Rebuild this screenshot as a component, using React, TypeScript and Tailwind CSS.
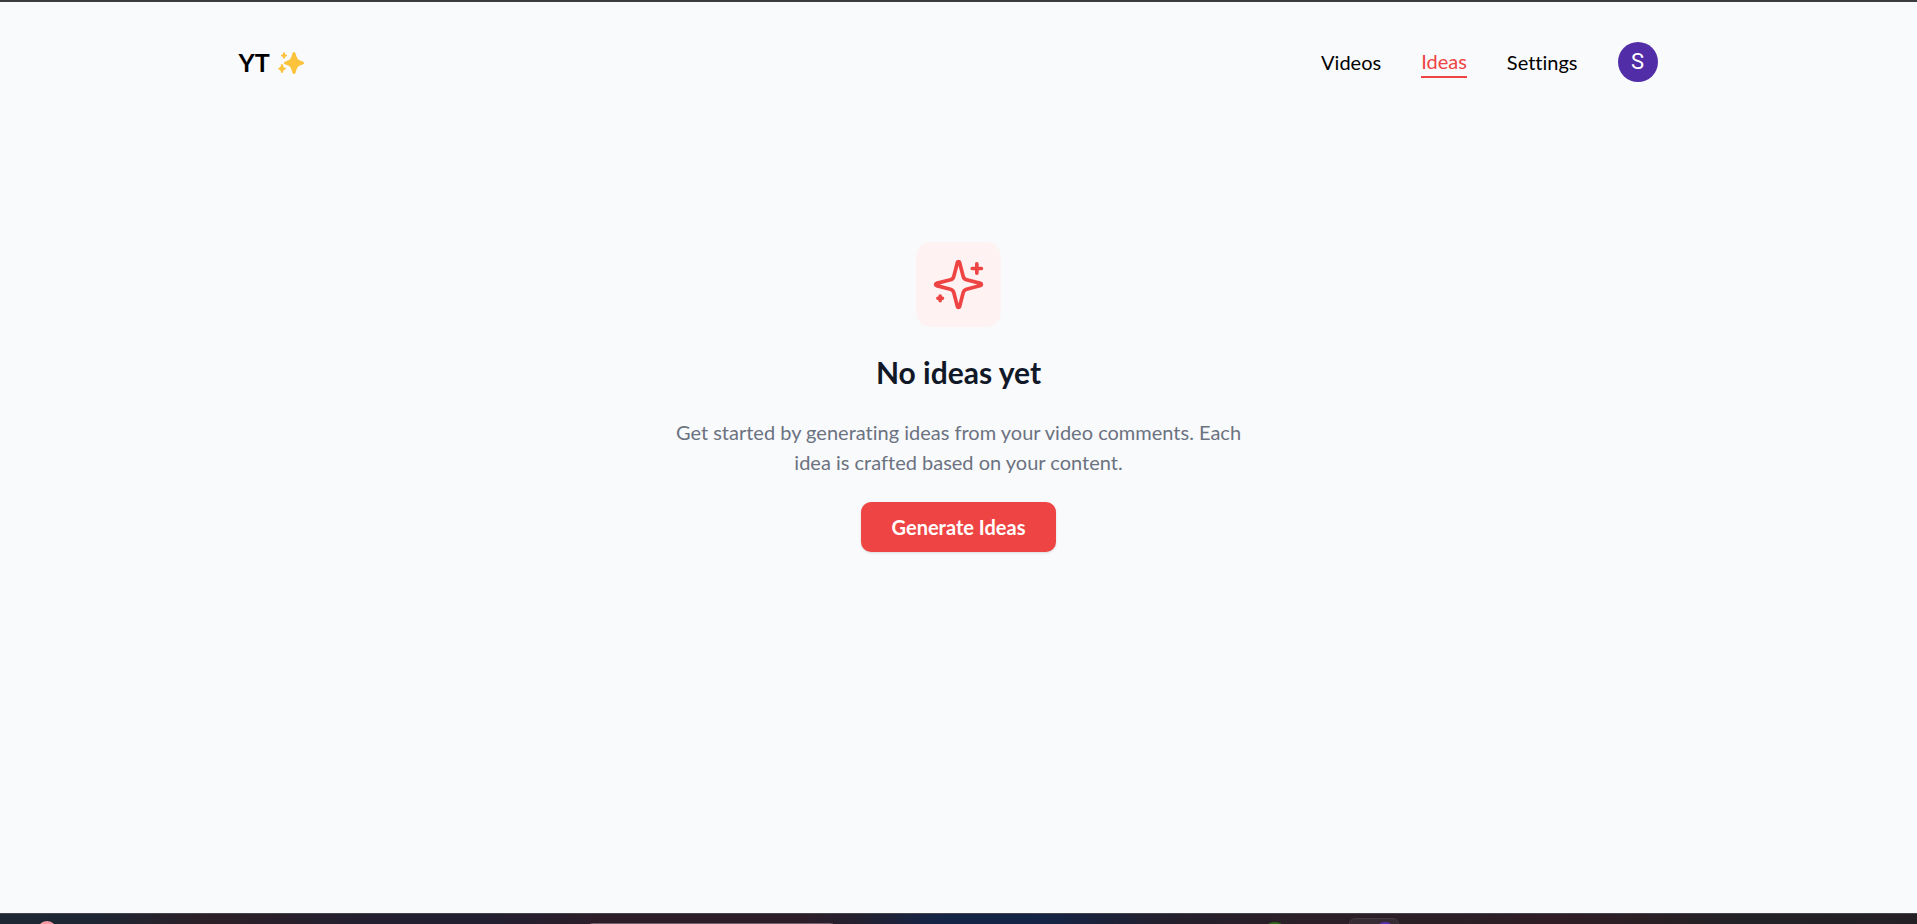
import React from "react";

function SparkleEmoji() {
  return (
    <svg viewBox="0 -2 26 26" className="size-[26px]" fill="#fbc23c" role="img" aria-label="sparkles">
      <path d="M16 1c.9 0 1.3.7 1.7 1.800.9 3.200 1.700 4.900 2.600 5.700s2.300 1.400 4.200 2c1 .3 1.500.8 1.500 1.500s-.5 1.200-1.500 1.500c-1.900.6-3.300 1.200-4.200 2s-1.700 2.500-2.600 5.700c-.4 1.200-.8 1.800-1.700 1.800s-1.300-.6-1.700-1.800c-.9-3.200-1.700-4.900-2.600-5.700s-2.300-1.400-4.200-2c-1-.3-1.500-.8-1.500-1.500s.5-1.200 1.500-1.500c1.900-.6 3.300-1.200 4.200-2s1.700-2.500 2.600-5.700c.4-1.100.8-1.800 1.700-1.800Z" />
      <path d="M6 1c.5 0 .6.3.8.9.4 1.300.7 1.600 1.600 1.900.4.100.8.3.8.700s-.4.600-.8.700c-.9.300-1.200.6-1.600 1.900-.2.600-.3.900-.8.900s-.6-.3-.8-.9c-.4-1.300-.7-1.600-1.600-1.900-.4-.1-.8-.3-.8-.7s.4-.6.8-.7c.9-.3 1.200-.6 1.600-1.900.2-.6.3-.9.8-.9Z" />
      <path d="M4 13c.6 0 .8.400 1 1.200.5 1.700.8 2.100 2 2.500.6.200 1 .400 1 .8s-.4.700-1 .9c-1.200.4-1.500.8-2 2.500-.2.700-.4 1.100-1 1.100s-.8-.4-1-1.100c-.5-1.700-.8-2.100-2-2.500-.6-.2-1-.5-1-.9s.4-.6 1-.8c1.200-.4 1.500-.8 2-2.500.2-.8.4-1.200 1-1.200Z" />
    </svg>
  );
}

function SparklesIcon() {
  return (
    <svg
      viewBox="0 0 24 24"
      className="size-[55px] text-[#ef4444]"
      fill="none"
      stroke="currentColor"
      strokeWidth="1.6"
      strokeLinecap="round"
      strokeLinejoin="round"
      aria-hidden="true"
    >
      <path d="M9.937 15.5A2 2 0 0 0 8.5 14.063l-6.135-1.582a.5.5 0 0 1 0-.962L8.5 9.936A2 2 0 0 0 9.937 8.5l1.582-6.135a.5.5 0 0 1 .963 0L14.063 8.5A2 2 0 0 0 15.5 9.937l6.135 1.581a.5.5 0 0 1 0 .964L15.5 14.063a2 2 0 0 0-1.437 1.437l-1.582 6.135a.5.5 0 0 1-.963 0z" />
      <path d="M20 3v4M22 5h-4M4 17v2M5 18H3" />
    </svg>
  );
}

function Header() {
  return (
    <header className="mx-auto flex w-full max-w-[1600px] items-center justify-between pt-10 pr-[101px] pl-20">
      <a href="#home" className="flex items-center gap-2 text-[25px] leading-10 font-bold text-black">
        YT
        <SparkleEmoji />
      </a>
      <nav className="flex items-center gap-10 text-[20px] leading-[30px] text-black">
        <a href="#videos">Videos</a>
        <a href="#ideas" className="border-b-2 border-[#ef4444] text-[#ef4444]">
          Ideas
        </a>
        <a href="#settings">Settings</a>
        <button
          type="button"
          aria-label="Account"
          className="flex size-10 items-center justify-center rounded-full bg-[#512da8] font-[Roboto,sans-serif] text-[22px] text-white"
        >
          S
        </button>
      </nav>
    </header>
  );
}

function EmptyState() {
  return (
    <main className="flex grow flex-col items-center px-5 pt-40 text-center">
      <div className="flex size-[85px] items-center justify-center rounded-[15px] bg-[#fef2f2]">
        <SparklesIcon />
      </div>
      <h1 className="mt-[25px] text-[30px] leading-10 font-bold text-[#111827]">No ideas yet</h1>
      <p className="mt-[25px] max-w-[600px] text-[20px] leading-[30px] text-[#6b7280]">
        Get started by generating ideas from your video comments. Each idea is crafted based on your content.
      </p>
      <button
        type="button"
        className="mt-[25px] h-[50px] rounded-[10px] bg-[#ef4444] px-[31px] text-[20px] font-bold text-white shadow-sm"
      >
        Generate Ideas
      </button>
    </main>
  );
}

function Taskbar() {
  return (
    <footer className="relative h-[11px] overflow-hidden border-t border-[#45444d] bg-[linear-gradient(90deg,#1d2733_0%,#1e2533_5%,#2d1f26_11%,#231f30_19%,#221f31_25%,#2d1d29_31%,#2d1d29_42%,#232030_45%,#142447_49%,#142447_54%,#241f2c_61%,#2c1f27_68%,#2b1f25_76%,#301c25_81%,#2a1f24_86%,#222125_91%,#241f24_100%)]">
      <div className="absolute top-[7px] left-[37px] size-5 rounded-full bg-[#f79aa3]" />
      <div className="absolute top-[9px] left-[585px] h-10 w-[253px] rounded-lg border border-[#75616d] bg-[#3d2d38]" />
      <div className="absolute top-2 left-[1263px] size-6 rounded-full bg-[#316a1c]" />
      <div className="absolute top-1 left-[1349px] h-12 w-[50px] rounded-md border border-[#46393f] bg-[#372c33]" />
      <div className="absolute top-2 left-[1375px] size-5 rounded-full bg-[#5a31b5]" />
    </footer>
  );
}

export default function App() {
  return (
    <div className="flex min-h-screen flex-col border-t-2 border-[#3a3d40] bg-[#f9fafc] font-[Lato,sans-serif] [font-variant-ligatures:none]">
      <Header />
      <EmptyState />
      <Taskbar />
    </div>
  );
}
